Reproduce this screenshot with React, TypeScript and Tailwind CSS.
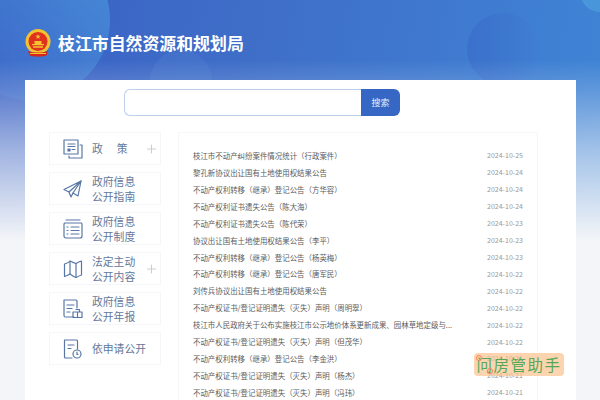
import React from 'react';

const font = "font-['Noto_Sans_CJK_SC','Noto_Sans',sans-serif]";

const news = [
  ['枝江市不动产纠纷案件情况统计（行政案件）', '2024-10-25'],
  ['黎孔新协议出让国有土地使用权结果公告', '2024-10-24'],
  ['不动产权利转移（继承）登记公告（方华容）', '2024-10-24'],
  ['不动产权利证书遗失公告（陈大海）', '2024-10-24'],
  ['不动产权利证书遗失公告（陈代荣）', '2024-10-23'],
  ['协议出让国有土地使用权结果公告（李平）', '2024-10-23'],
  ['不动产权利转移（继承）登记公告（杨英梅）', '2024-10-23'],
  ['不动产权利转移（继承）登记公告（唐军民）', '2024-10-22'],
  ['刘传兵协议出让国有土地使用权结果公告', '2024-10-22'],
  ['不动产权证书/登记证明遗失（灭失）声明（周明翠）', '2024-10-22'],
  ['枝江市人民政府关于公布实施枝江市公示地价体系更新成果、园林草地定级与...', '2024-10-22'],
  ['不动产权证书/登记证明遗失（灭失）声明（但茂华）', '2024-10-22'],
  ['不动产权利转移（继承）登记公告（李金洪）', '2024-10-21'],
  ['不动产权证书/登记证明遗失（灭失）声明（杨杰）', '2024-10-21'],
  ['不动产权证书/登记证明遗失（灭失）声明（冯玮）', '2024-10-21'],
];

const stroke = { fill: 'none', stroke: '#5877a6', strokeWidth: 1.2, strokeLinejoin: 'round' as const, strokeLinecap: 'round' as const };

const icons: Record<string, React.ReactNode> = {
  policy: (
    <svg width="20" height="20" viewBox="0 0 20 20" {...stroke}>
      <path d="M1 1h14v14H1z" />
      <path d="M17 6h2v13H6v-2" />
      <path d="M5 5h7M5 7.500h7M9 10.500h3" />
      <path d="M5 10h2v2H5z" fill="#5877a6" />
    </svg>
  ),
  guide: (
    <svg width="20" height="20" viewBox="0 0 20 20" {...stroke}>
      <path d="M18 2 1 10.500l5 2.500L18 2l-3 15-5-3" />
      <path d="M6 13l2 5 2-4 8-12" />
    </svg>
  ),
  system: (
    <svg width="20" height="20" viewBox="0 0 20 20" {...stroke}>
      <path d="M3 1h14M1.500 4h17l.5 1v12a2 2 0 0 1-2 2H3a2 2 0 0 1-2-2V5z" />
      <path d="M4 8h1M8 8h8M4 11.500h1M8 11.500h8M4 15h1M8 15h8" />
    </svg>
  ),
  map: (
    <svg width="20" height="20" viewBox="0 0 20 20" {...stroke}>
      <path d="M7 2C5.500 4 3 4.500 1.500 5v12.500C3 17 5.500 16 7 15c2 1.500 4 3 6 3.500 2-1 4-2 5.500-2.500V2c-2 .5-4 1.500-5.500 2.500C11 4 9 3 7 2z" />
      <path d="M7 2v13M13 4.500v14" />
    </svg>
  ),
  report: (
    <svg width="20" height="20" viewBox="0 0 20 20" {...stroke}>
      <path d="M11 18H2.500a1.500 1.500 0 0 1-1.500-1.500V1h12a1 1 0 0 1 1 1v7" />
      <path d="M4 6h7M4 9.500h5M4 13h3" />
      <path d="M10 13h9v5.500h-9zM13 10.500h3.500V13M14.500 13v5.500" />
    </svg>
  ),
  apply: (
    <svg width="20" height="20" viewBox="0 0 20 20" {...stroke}>
      <path d="M9 19H2.500a1 1 0 0 1-1-1V1h12a1 1 0 0 1 1 1v8" />
      <path d="M5 6h6M5 9.500h3" />
      <circle cx="14" cy="15" r="4" />
      <path d="M14 13v2.500h1" />
    </svg>
  ),
};

const menu = [
  { icon: 'policy', lines: ['政策'], wide: true, plus: true },
  { icon: 'guide', lines: ['政府信息', '公开指南'] },
  { icon: 'system', lines: ['政府信息', '公开制度'] },
  { icon: 'map', lines: ['法定主动', '公开内容'], plus: true },
  { icon: 'report', lines: ['政府信息', '公开年报'] },
  { icon: 'apply', lines: ['依申请公开'] },
];

function Emblem() {
  return (
    <svg width="26" height="28" viewBox="0 0 26 28" className="shrink-0">
      <circle cx="13" cy="12.500" r="12.500" fill="#f2c230" />
      <circle cx="13" cy="12.500" r="9.500" fill="#e0301e" />
      <path d="M13 5l.7 1.800h1.900l-1.500 1.200.6 1.900L13 8.800l-1.700 1.100.6-1.900-1.500-1.200h1.900z" fill="#f2c230" />
      <path d="M7 15h12v1.300H7zM8 17.300h10v1.400H8zM9.500 12h7v3h-7z" fill="#f2c230" />
      <path d="M3 22c3 1 6 1.500 10 1.500S20 23 23 22l-1.500 4.500c-3 1.500-14 1.500-17 0z" fill="#d9261c" />
      <path d="M5 24h16v1H5z" fill="#f2c230" />
    </svg>
  );
}

function Plus() {
  return (
    <svg width="9" height="9" viewBox="0 0 10 10" className="absolute right-[4px] top-1/2 -translate-y-1/2" stroke="#c9ced6" strokeWidth="1.200">
      <path d="M5 0v10M0 5h10" />
    </svg>
  );
}

export default function App() {
  return (
    <div className={`${font} relative h-[400px] w-[600px] overflow-hidden bg-[#f3f5f8]`}>
      {/* header background */}
      <div className="absolute inset-x-0 top-0 h-[240px] bg-[linear-gradient(100deg,#3a60c4_0%,#3f70c9_45%,#3f85d6_100%)]" />
      <div className="absolute left-[-50px] top-[-60px] h-[160px] w-[160px] rounded-full bg-[linear-gradient(45deg,rgba(70,120,210,0.05),rgba(74,150,222,0.8))]" />
      <div className="absolute left-[150px] top-[50px] h-[62px] w-[62px] rounded-full bg-[#6a9ae0]/15" />
      <div className="absolute left-[467px] top-[13px] h-[72px] w-[72px] rounded-full bg-[linear-gradient(90deg,rgba(56,104,200,0.55),rgba(60,120,210,0.05))]" />
      <div className="absolute left-[580px] top-[-28px] h-[40px] w-[40px] rounded-full bg-[#4a96da]" />
      <div className="absolute inset-x-0 top-[60px] h-[180px] bg-[linear-gradient(180deg,rgba(243,245,248,0)_0%,rgba(243,245,248,0.55)_50%,#f3f5f8_100%)]" />

      <div className="relative flex flex-col px-[25px]">
        <header className="flex h-[80px] items-center gap-[7px] pt-[5px]">
          <Emblem />
          <h1 className="text-[16.900px] font-bold text-white">枝江市自然资源和规划局</h1>
        </header>

        <main className="h-[320px] w-[551px] bg-white">
          <div className="flex pl-[99px] pt-[9px]">
            <div className="h-[27px] w-[237px] rounded-l-[6px] border border-r-0 border-[#bcd0ea] bg-white" />
            <button className="h-[27px] w-[39px] rounded-r-[6px] bg-[#3767c4] text-[9px] text-[#e8eefa]">搜索</button>
          </div>

          <div className="flex gap-[17px] pl-[24px] pt-[16px]">
            <nav className="flex w-[112px] flex-col gap-[7px]">
              {menu.map((m) => (
                <div key={m.icon} className="relative flex h-[33px] items-center border border-[#f5f6f8] pl-[13px]">
                  <span className="flex w-[29px] shrink-0">{icons[m.icon]}</span>
                  <div className={`text-[10.800px] leading-[14.500px] text-[#64789b] ${m.wide ? 'tracking-[14px]' : ''}`}>
                    {m.lines.map((l) => (
                      <div key={l} className="whitespace-nowrap">{l}</div>
                    ))}
                  </div>
                  {m.plus && <Plus />}
                </div>
              ))}
            </nav>

            <section className="h-[300px] w-[360px] border border-[#f5f6f8] px-[14px] pt-[14px]">
              {news.map(([title, date]) => (
                <div key={title} className="flex h-[16.950px] items-center justify-between">
                  <span className="whitespace-nowrap text-[7.450px] text-[#5c5c5c]">{title}</span>
                  <span className="text-[7px] text-[#999]">{date}</span>
                </div>
              ))}
            </section>
          </div>
        </main>
      </div>

      {/* watermark */}
      <div className="absolute left-[474px] top-[353px] flex h-[23px] w-[90px] items-center justify-center rounded-[4px] bg-[#fbbf86]/65 text-[15.500px] leading-none tracking-[1.500px] text-[#56a856]">
        问房管助手
        <span className="absolute left-[2px] top-[2px] h-[6px] w-[6px] rounded-full border border-[#f47f5a]" />
        <span className="absolute left-[13px] top-[15px] h-[6px] w-[6px] rounded-full border border-[#f47f5a]" />
      </div>
    </div>
  );
}
